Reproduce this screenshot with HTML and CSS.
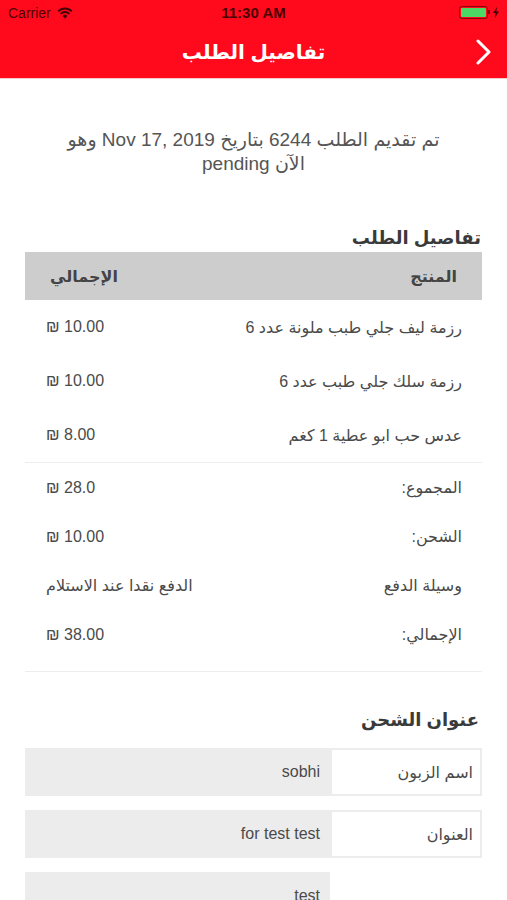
FILE: index.html
```html
<!DOCTYPE html>
<html lang="ar" dir="rtl">
<head>
    <meta charset="UTF-8">
    <meta name="viewport" content="width=device-width, initial-scale=1.0">
    <title>تفاصيل الطلب</title>
    <link rel="stylesheet" href="styles.css">
</head>
<body>
    <div class="top-bar">
        <div class="status-bar" dir="ltr">
            <div class="carrier">
                Carrier
                <svg class="wifi" width="16" height="12" viewBox="0 0 16 12">
                    <path d="M8 11.5 L5.6 8.9 A3.4 3.4 0 0 1 10.4 8.9 Z" fill="currentColor"/>
                    <path d="M3.6 6.9 A6.2 6.2 0 0 1 12.4 6.9" stroke="currentColor" stroke-width="2" fill="none"/>
                    <path d="M1.2 4.3 A9.6 9.6 0 0 1 14.8 4.3" stroke="currentColor" stroke-width="2" fill="none"/>
                </svg>
            </div>
            <div class="time">11:30 AM</div>
            <div class="battery-wrap">
                <div class="battery"><div class="battery-fill"></div></div>
                <svg class="bolt" width="6" height="11" viewBox="0 0 6 11">
                    <path d="M4 0 L0 6 H2.6 L1.8 11 L6 4.6 H3.4 Z" fill="currentColor"/>
                </svg>
            </div>
        </div>
        <div class="nav-bar">
            <h1 class="nav-title">تفاصيل الطلب</h1>
            <svg class="back" width="16" height="26" viewBox="0 0 16 26">
                <polyline points="2,2 13,13 2,24" fill="none" stroke="white" stroke-width="3" stroke-linecap="round" stroke-linejoin="round"/>
            </svg>
        </div>
    </div>

    <div class="page">
        <p class="intro">تم تقديم الطلب 6244 بتاريخ Nov 17, 2019 وهو الآن pending</p>

        <h2 class="section-title">تفاصيل الطلب</h2>
        <div class="order-table">
            <div class="table-head">
                <span class="col-product">المنتج</span>
                <span class="col-total">الإجمالي</span>
            </div>
            <div class="items">
                <div class="row">
                    <span class="col-product">رزمة ليف جلي طبب ملونة عدد 6</span>
                    <span class="col-total"><bdi dir="ltr">₪ 10.00</bdi></span>
                </div>
                <div class="row">
                    <span class="col-product">رزمة سلك جلي طبب عدد 6</span>
                    <span class="col-total"><bdi dir="ltr">₪ 10.00</bdi></span>
                </div>
                <div class="row">
                    <span class="col-product">عدس حب ابو عطية 1 كغم</span>
                    <span class="col-total"><bdi dir="ltr">₪ 8.00</bdi></span>
                </div>
            </div>
            <div class="totals">
                <div class="row total-row">
                    <span class="col-product">المجموع:</span>
                    <span class="col-total"><bdi dir="ltr">₪ 28.0</bdi></span>
                </div>
                <div class="row total-row">
                    <span class="col-product">الشحن:</span>
                    <span class="col-total"><bdi dir="ltr">₪ 10.00</bdi></span>
                </div>
                <div class="row total-row">
                    <span class="col-product">وسيلة الدفع</span>
                    <span class="col-total">الدفع نقدا عند الاستلام</span>
                </div>
                <div class="row total-row">
                    <span class="col-product">الإجمالي:</span>
                    <span class="col-total"><bdi dir="ltr">₪ 38.00</bdi></span>
                </div>
            </div>
        </div>

        <h2 class="section-title address-title">عنوان الشحن</h2>
        <div class="address">
            <div class="address-row">
                <div class="address-label">اسم الزبون</div>
                <div class="address-value">sobhi</div>
            </div>
            <div class="address-row">
                <div class="address-label">العنوان</div>
                <div class="address-value">for test test</div>
            </div>
            <div class="address-row">
                <div class="address-label empty"></div>
                <div class="address-value">test</div>
            </div>
        </div>
    </div>
</body>
</html>
```

FILE: styles.css
```css
body {
    margin: 0;
    width: 507px;
    background-color: white;
    font-family: "Liberation Sans", "DejaVu Sans", sans-serif;
    color: #4a4a4a;
    overflow: hidden;
}
.top-bar {
    background-color: #fe0a1c;
    color: white;
    border-bottom: 1px solid #f3c9cc;
}
.status-bar {
    height: 25px;
    display: flex;
    align-items: center;
    justify-content: space-between;
    padding: 0 8px;
    color: rgba(40, 0, 0, 0.85);
    font-size: 14px;
}
.carrier {
    display: flex;
    align-items: center;
    gap: 6px;
    width: 120px;
}
.time {
    font-weight: bold;
    font-size: 15px;
}
.battery-wrap {
    width: 120px;
    display: flex;
    justify-content: flex-end;
    align-items: center;
    gap: 5px;
}
.battery {
    width: 25px;
    height: 9px;
    border: 1px solid rgba(60, 0, 0, 0.6);
    border-radius: 3px;
    padding: 1px;
    position: relative;
}
.battery::after {
    content: "";
    position: absolute;
    right: -3px;
    top: 3px;
    width: 2px;
    height: 4px;
    background-color: rgba(60, 0, 0, 0.6);
}
.battery-fill {
    width: 100%;
    height: 100%;
    background-color: #4cd964;
    border-radius: 1px;
}
.nav-bar {
    height: 53px;
    display: flex;
    align-items: center;
    justify-content: center;
    position: relative;
}
.nav-title {
    margin: 0;
    font-size: 20px;
    font-weight: bold;
    color: white;
}
.back {
    position: absolute;
    right: 15px;
    top: 14px;
}
.page {
    padding: 0 25px;
}
.intro {
    margin: 49px 0 0;
    padding: 0 36px;
    text-align: center;
    font-size: 19px;
    line-height: 24px;
    color: #555;
}
.section-title {
    margin: 50px 1px 2px 0;
    font-size: 18px;
    line-height: 24px;
    font-weight: bold;
    color: #3a3a3a;
}
.table-head {
    height: 48px;
    display: flex;
    align-items: center;
    background-color: #cdcdcd;
    font-weight: bold;
    font-size: 16px;
    color: #444;
    padding: 0 25px;
}
.col-product {
    flex: 1;
}
.col-total {
    flex: 0 0 auto;
    min-width: 88px;
    text-align: left;
}
.row {
    height: 54px;
    display: flex;
    align-items: center;
    padding: 0 20px 0 21px;
    font-size: 16px;
    color: #4a4a4a;
}
.totals {
    border-top: 1px solid #ededed;
    border-bottom: 1px solid #ededed;
    padding-bottom: 12px;
}
.total-row {
    height: 49px;
}
.address-title {
    margin-top: 36px;
    margin-right: 3px;
    margin-bottom: 16px;
}
.address {
    display: flex;
    flex-direction: column;
    gap: 14px;
}
.address-row {
    height: 48px;
    display: flex;
    font-size: 16px;
    color: #4a4a4a;
}
.address-label {
    width: 152px;
    border: 2px solid #ececec;
    display: flex;
    align-items: center;
    padding-right: 7px;
    box-sizing: border-box;
}
.address-label.empty {
    border-color: transparent;
}
.address-value {
    flex: 1;
    background-color: #ececec;
    display: flex;
    align-items: center;
    padding-right: 10px;
}
```
